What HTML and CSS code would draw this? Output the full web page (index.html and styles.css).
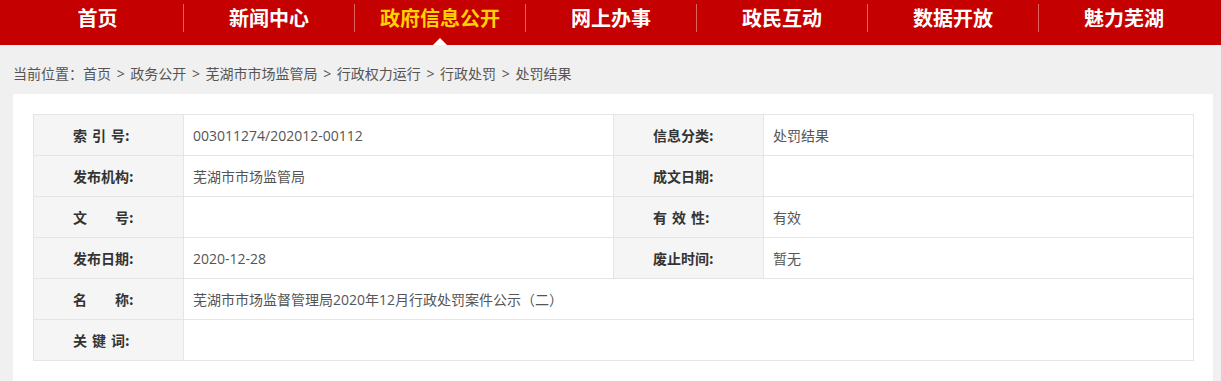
FILE: index.html
```html
<!DOCTYPE html>
<html lang="zh-CN">
<head>
<meta charset="utf-8">
<title>芜湖市市场监督管理局2020年12月行政处罚案件公示（二）</title>
<link rel="stylesheet" href="styles.css">
</head>
<body>
<header class="nav">
  <ul class="nav-list">
    <li class="nav-item">首页</li>
    <li class="nav-item">新闻中心</li>
    <li class="nav-item active">政府信息公开</li>
    <li class="nav-item">网上办事</li>
    <li class="nav-item">政民互动</li>
    <li class="nav-item">数据开放</li>
    <li class="nav-item">魅力芜湖</li>
  </ul>
</header>
<div class="crumb">当前位置：首页 &gt; 政务公开 &gt; 芜湖市市场监管局 &gt; 行政权力运行 &gt; 行政处罚 &gt; 处罚结果</div>
<main class="panel">
  <table class="info">
    <tr>
      <th><span class="k k3">索引号</span>:</th>
      <td>003011274/202012-00112</td>
      <th><span class="k">信息分类</span>:</th>
      <td>处罚结果</td>
    </tr>
    <tr>
      <th><span class="k">发布机构</span>:</th>
      <td>芜湖市市场监管局</td>
      <th><span class="k">成文日期</span>:</th>
      <td></td>
    </tr>
    <tr>
      <th><span class="k k2">文号</span>:</th>
      <td></td>
      <th><span class="k k3">有效性</span>:</th>
      <td>有效</td>
    </tr>
    <tr>
      <th><span class="k">发布日期</span>:</th>
      <td>2020-12-28</td>
      <th><span class="k">废止时间</span>:</th>
      <td>暂无</td>
    </tr>
    <tr>
      <th><span class="k k2">名称</span>:</th>
      <td colspan="3">芜湖市市场监督管理局2020年12月行政处罚案件公示（二）</td>
    </tr>
    <tr>
      <th><span class="k k3">关键词</span>:</th>
      <td colspan="3"></td>
    </tr>
  </table>
</main>
</body>
</html>
```
FILE: styles.css
```css
* { box-sizing: border-box; }
html, body {
  margin: 0;
  padding: 0;
  background: #f0f0f0;
  font-family: "Open Sans", "Noto Sans CJK SC", sans-serif;
  color: #555;
}
.nav {
  position: relative;
  height: 45px;
  background: #c40000;
  padding-top: 4px;
}
.nav-list {
  list-style: none;
  margin: 0 0 0 12px;
  padding: 0;
  display: flex;
}
.nav-item {
  position: relative;
  width: 171px;
  height: 28px;
  line-height: 28px;
  text-align: center;
  color: #fff;
  font-size: 20px;
  font-weight: bold;
  font-family: "Noto Sans CJK SC", sans-serif;
}
.nav-item + .nav-item {
  border-left: 1px solid #e06262;
}
.nav-item.active {
  color: #ffd200;
}
.nav-item.active::after {
  content: "";
  position: absolute;
  left: 50%;
  margin-left: -7px;
  top: 34px;
  border-left: 7px solid transparent;
  border-right: 7px solid transparent;
  border-bottom: 7px solid #fff;
}
.crumb {
  margin-left: 13px;
  padding: 18px 0 10px;
  height: 49px;
  line-height: 21px;
  font-size: 14px;
  word-spacing: 2px;
  color: #555;
}
.panel {
  margin-left: 13px;
  width: 1200px;
  background: #fff;
  padding: 20px 20px 30px;
}
.info {
  width: 1160px;
  border-collapse: collapse;
  table-layout: fixed;
  font-size: 14px;
}
.info th, .info td {
  border: 1px solid #e5e5e5;
  height: 41px;
  padding: 0;
  vertical-align: middle;
}
.info th {
  width: 150px;
  background: #f5f5f5;
  color: #333;
  font-weight: bold;
  text-align: left;
  padding-left: 39px;
  font-family: "Noto Sans CJK SC", sans-serif;
}
.info td {
  width: 430px;
  padding-left: 9px;
  color: #555;
}
.k {
  display: inline-block;
  text-align-last: justify;
}
.k3 { width: 52px; }
.k2 { width: 56px; }
```
